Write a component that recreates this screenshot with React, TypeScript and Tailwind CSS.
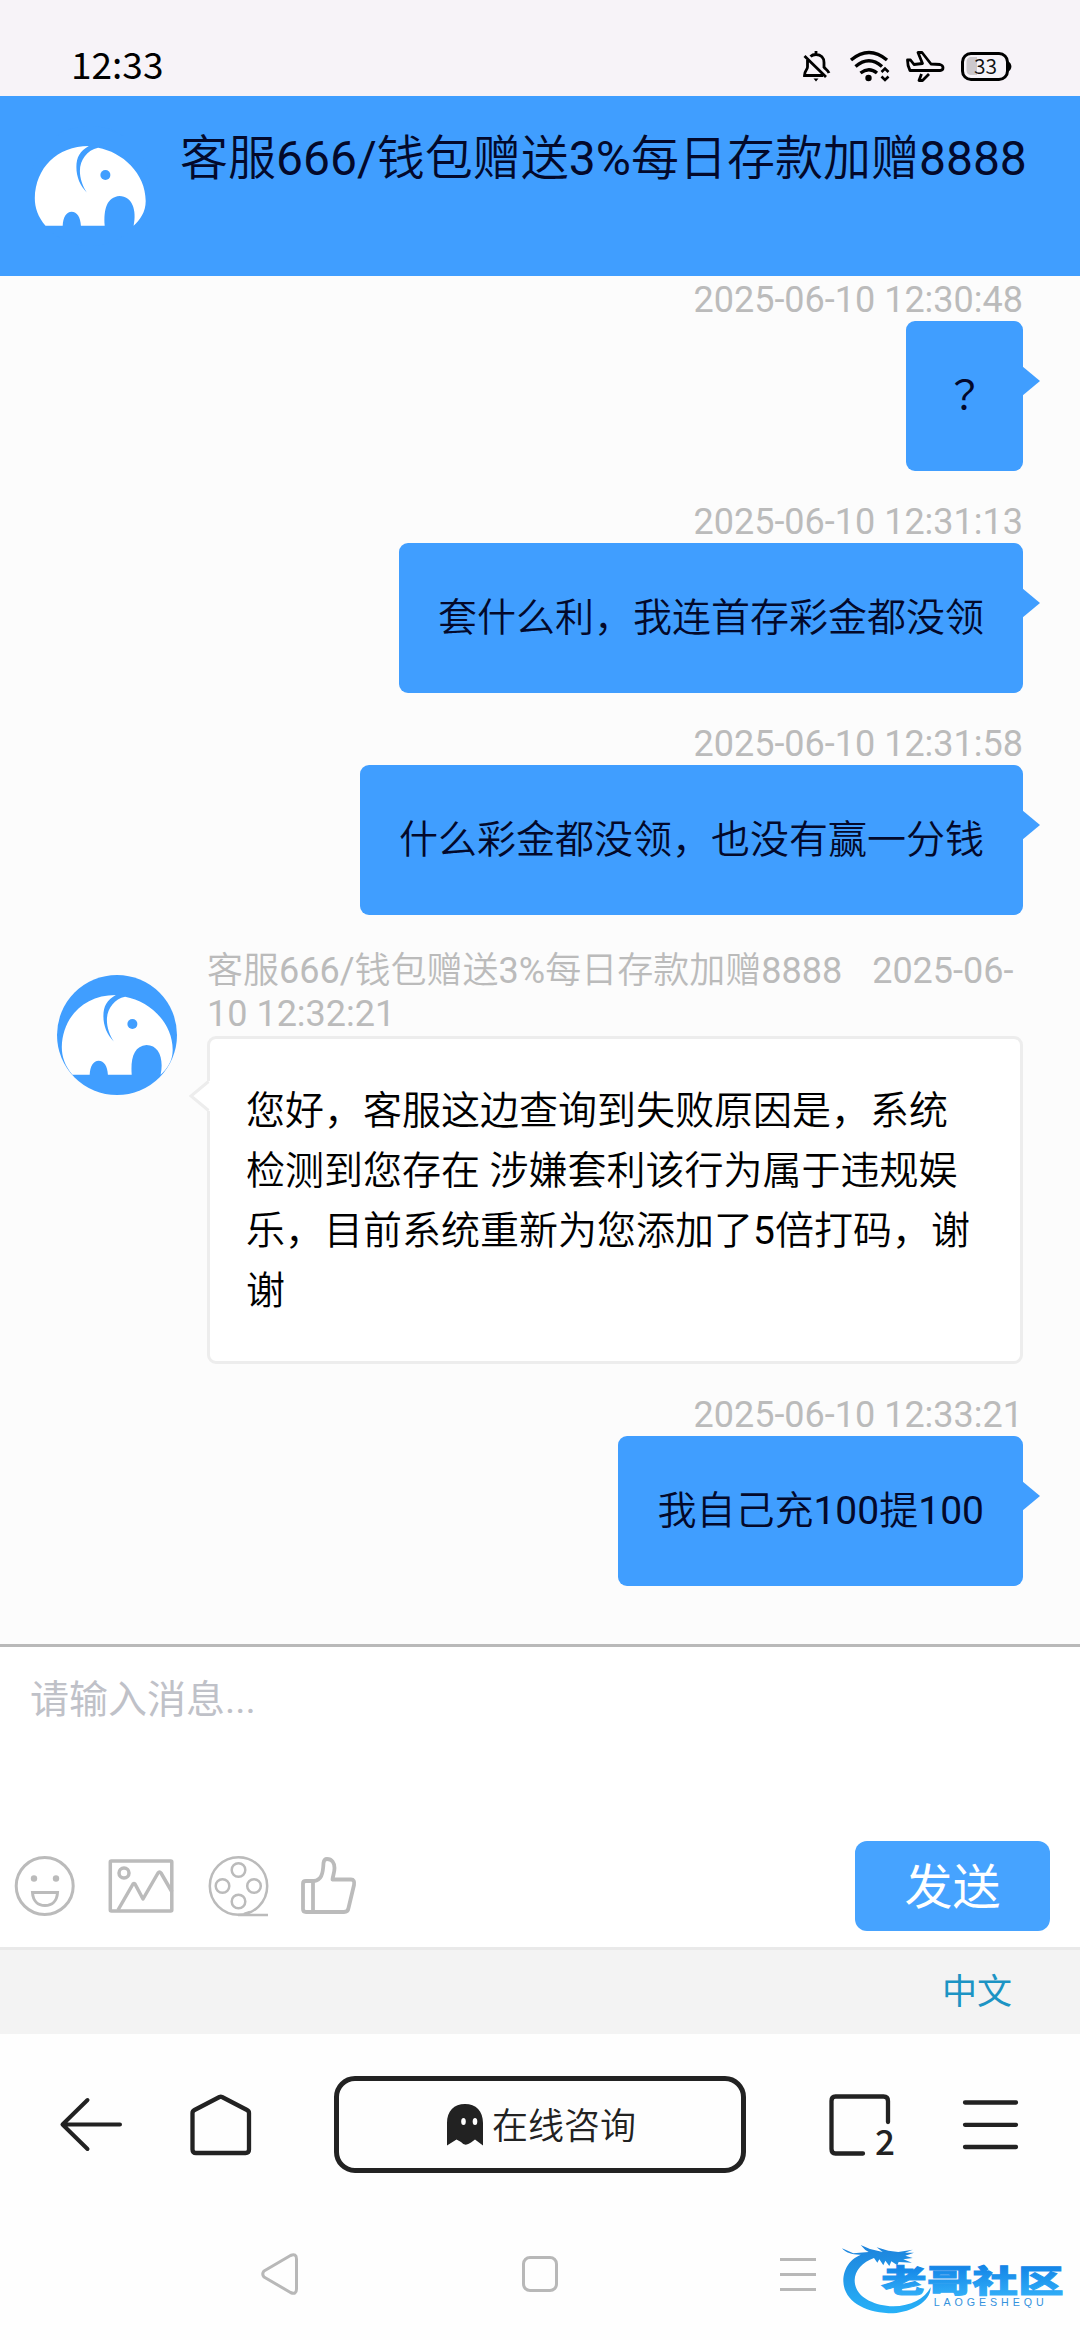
import React from "react";

const AGENT = "客服666/钱包赠送3%每日存款加赠8888";

const REPLY = [
  "您好，客服这边查询到失败原因是，系统",
  "检测到您存在 涉嫌套利该行为属于违规娱",
  "乐，目前系统重新为您添加了5倍打码，谢",
  "谢",
];

/* Chinese glyphs are set slightly lighter than the Latin letters and digits beside them. */
function Mixed({ text }: { text: string }) {
  return (
    <>
      {text.split(/([0-9/%]+)/).filter(Boolean).map((run, i) =>
        /^[0-9/%]/.test(run) ? (
          <span key={i} className="font-normal">{run}</span>
        ) : (
          <React.Fragment key={i}>{run}</React.Fragment>
        ),
      )}
    </>
  );
}

function Elephant({ className }: { className?: string }) {
  return (
    <svg viewBox="0 0 120 120" className={className}>
      <circle cx="60" cy="60" r="60" fill="#409eff" />
      <path
        d="M15.5 99.7C8 91 4.8 82 4.8 72C5.5 42 27 20 58.8 20C50 25 46.4 31 46.4 41C46.4 51 50 59.500 56.800 66.500C52.500 60 49.900 52 49.900 45C49.900 34 57 24 68.100 21.700C92 26 115.700 47 115.700 75C115.700 86 110 94 103.600 99.700C107 84 102 70 89.500 70C77 71 73.500 83 74.700 99.700H50.900C50.500 91 47 85.700 41.600 85.700C36.500 85.700 33 91 32.700 99.700Z"
        fill="#fff"
      />
      <circle cx="75.400" cy="49" r="5" fill="#409eff" />
    </svg>
  );
}

function StatusBar() {
  return (
    <div className="flex h-24 items-start bg-[#f7f3f8] pl-[71px] pr-[68px]">
      <div className="mt-[36px] font-['Noto_Sans_CJK_SC',sans-serif] text-[37px] font-normal leading-[54px] text-black">12:33</div>
      <div className="ml-auto mt-[50px] flex h-8 items-center text-black">
        <svg className="mr-[18px] h-8 w-[29px]" viewBox="0 0 29 32" fill="none" stroke="currentColor" strokeWidth="2.800">
          <path d="M14 1V5M8.500 6.500C10 5 12 4.500 14 4.500C19 4.500 22 8 22 12.500V18M5.500 10V17C5.500 20 2.500 20.500 2.500 25.500H21M2.500 6L24 27M22 17C23 19 26 20 27 23" />
          <path d="M11.500 28.500H16.500L14 31.500Z" fill="currentColor" stroke="none" />
        </svg>
        <svg className="mr-[14px] h-8 w-[42px]" viewBox="0 0 42 32" fill="none" stroke="currentColor" strokeWidth="3.400">
          <path d="M2 10Q20 -5 38 10M6.500 16.500Q20 5 33 16.500M11.500 23Q20 16.500 28 23" />
          <circle cx="19.500" cy="28" r="3.200" fill="currentColor" stroke="none" />
          <path d="M32.500 22L36 18.500L39.500 22M32.500 26.500L36 30L39.500 26.500" strokeWidth="2.600" />
        </svg>
        <svg className="mr-[15px] h-8 w-[40px]" viewBox="0 0 40 32" fill="none" stroke="currentColor" strokeWidth="2.800" strokeLinejoin="round">
          <path d="M2.500 10H5.500L9 14.500L17.500 13.500L13 2.500H17L26 14L35 14.500C39 15.500 39 20 35 20.500H5C3 17 2.500 14 2.500 10Z" />
          <path d="M16.500 24L14 30.500H17.500L24 24" />
        </svg>
        <svg className="h-8 w-[52px]" viewBox="0 0 52 32">
          <path d="M12 7H17V25H12C8 25 6.500 23 6.500 20V12C6.500 9 8 7 12 7Z" fill="#ccc8cc" />
          <rect x="2.500" y="3.500" width="45" height="26" rx="8.500" fill="none" stroke="#000" strokeWidth="3" />
          <path d="M48 11.500C52.500 13 52.500 20 48 21.500Z" fill="#000" />
          <text x="25.500" y="24" textAnchor="middle" fontSize="21" fontFamily="Noto Sans CJK SC, sans-serif" fill="#111">33</text>
        </svg>
      </div>
    </div>
  );
}

function Stamp({ children }: { children: React.ReactNode }) {
  return <div className="text-right text-[36px] font-normal leading-[42px] text-[#bbb]">{children}</div>;
}

function Sent({ time, text, centered = false }: { time: string; text: string; centered?: boolean }) {
  return (
    <div className="flex flex-col items-end">
      <Stamp>{time}</Stamp>
      <div className="relative h-[150px] rounded-[9px] bg-[#409eff] px-[39px] pt-[45px] text-[39px] leading-[60px] text-[#03092b]">
        {centered ? (
          <span className="font-[Roboto,'Noto_Sans_CJK_TC',sans-serif] font-normal">{text}</span>
        ) : (
          <Mixed text={text} />
        )}
        <svg className="absolute -right-[17px] top-[45px] h-[30px] w-[18px]" viewBox="0 0 18 30">
          <path d="M0 0L18 15L0 30Z" fill="#409eff" />
        </svg>
      </div>
    </div>
  );
}

function Received() {
  return (
    <div className="flex">
      <Elephant className="ml-[57px] mt-[30px] h-[120px] w-[120px] shrink-0" />
      <div className="ml-[30px] flex w-[816px] flex-col">
        <div className="pt-[5px] text-[36px] leading-[43px] text-[#bbb]">
          <div className="flex whitespace-nowrap">
            <div><Mixed text={AGENT} /></div>
            <div className="ml-[30px] font-normal">2025-06-</div>
          </div>
          <div className="font-normal">10 12:32:21</div>
        </div>
        <div className="relative h-[328px] rounded-[9px] border-[3px] border-[#ededed] bg-white px-[36px] pt-[42px] text-[39px] leading-[60px] text-black">
          {REPLY.map((line) => (
            <p key={line} className="whitespace-nowrap">
              <Mixed text={line} />
            </p>
          ))}
          <svg className="absolute -left-[22px] top-[41px] h-[32px] w-[24px]" viewBox="0 0 24 32">
            <path d="M24 0L20 1.500L3 16L20 30.500L24 32Z" fill="#fff" />
            <path d="M20.500 1.500L3 16L20.500 30.500" fill="none" stroke="#ededed" strokeWidth="3" />
          </svg>
        </div>
      </div>
    </div>
  );
}

function Composer() {
  return (
    <div className="flex h-[303px] flex-col border-b-[3px] border-[#e9e9e9] bg-white pt-[23px]">
      <div className="pl-[30px] text-[39px] font-normal leading-[60px] text-[#bfc1c8]">请输入消息...</div>
      <div className="mb-[16px] mt-auto flex h-[90px] items-center pl-[14px] pr-[30px]">
        <svg className="h-[62px] w-[62px]" viewBox="0 0 62 62" fill="none" stroke="#bbb" strokeWidth="3">
          <circle cx="30.700" cy="31" r="28.500" />
          <circle cx="20" cy="23.500" r="3.200" fill="#bbb" stroke="none" />
          <circle cx="42" cy="23.500" r="3.200" fill="#bbb" stroke="none" />
          <path d="M18.500 37.500H43.500C43 46 38 50.500 31 50.500C24 50.500 19 46 18.500 37.500Z" />
        </svg>
        <svg className="ml-[32px] h-[56px] w-[66px]" viewBox="0 0 66 56" fill="none" stroke="#bbb" strokeWidth="3.500" strokeLinejoin="round">
          <rect x="2.300" y="3" width="61.500" height="50" rx="1" />
          <circle cx="16" cy="15" r="5" />
          <path d="M10 52L25 26Q26 25 27 26L35 41L50 15Q51.500 13 53 15L64 34" />
        </svg>
        <svg className="ml-[34px] h-[62px] w-[62px]" viewBox="0 0 62 62" fill="none" stroke="#bbb" strokeWidth="2.500">
          <circle cx="30.500" cy="31" r="28.700" />
          <circle cx="30.500" cy="15" r="6.800" />
          <circle cx="14.500" cy="31" r="6.800" />
          <circle cx="46" cy="31" r="6.800" />
          <circle cx="30.500" cy="46.500" r="6.800" />
          <path d="M30 60H60" />
          <path d="M36 59L42 57" />
        </svg>
        <svg className="ml-[29px] h-[60px] w-[60px]" viewBox="0 0 60 60" fill="none" stroke="#bbb" strokeWidth="3.800" strokeLinejoin="round">
          <path d="M4 27.500Q4 25 7 25H15C22 24 24 19 24.500 7Q25 3 28 3C33 3 35.500 7 35.500 12C35.500 17 34 19 33.500 23.500H52Q56 23.500 55 29L49.500 52Q49 56 45 56H7Q4 56 4 53Z" />
          <path d="M14 25V56" />
        </svg>
        <button className="ml-auto h-[90px] w-[195px] rounded-xl bg-[#46a3ff] pt-[3px] text-[48px] font-normal leading-[87px] text-white">发送</button>
      </div>
    </div>
  );
}

function BrowserBar() {
  return (
    <div className="flex h-[97px] items-center text-[#222]">
      <svg className="ml-[58px] h-[60px] w-[66px]" viewBox="0 0 66 60" fill="none" stroke="currentColor" strokeWidth="4" strokeLinecap="round" strokeLinejoin="round">
        <path d="M62 29.500H4.500M29.500 5L4.500 29.500L29.500 54" />
      </svg>
      <svg className="ml-[64px] h-[66px] w-[66px]" viewBox="0 0 66 66" fill="none" stroke="currentColor" strokeWidth="4.300" strokeLinejoin="round">
        <path d="M31.500 5Q32.800 4.500 34 5L59 18Q61 19 61 21V57.500Q61 61 57.500 61H8Q4.500 61 4.500 57.500V21Q4.500 19 6.500 18Z" />
      </svg>
      <div className="ml-[80px] flex h-[97px] w-[412px] items-center rounded-[21px] border-[5px] border-[#222] pl-[108px] text-[36px] leading-[54px]">
        <svg className="mr-[9px] h-[42px] w-[36px]" viewBox="0 0 36 42">
          <path d="M0 19C0 7 7 0 18 0S36 7 36 19V41.500L28 35.500L24 38.500Q18 43 14 38L9.500 35.500L0 41.500Z" fill="#222" />
          <ellipse cx="16.500" cy="17.500" rx="2.300" ry="3.500" fill="#fff" />
          <ellipse cx="28" cy="17.500" rx="2.300" ry="3.500" fill="#fff" />
        </svg>
        <span className="pt-[5px]">在线咨询</span>
      </div>
      <div className="relative ml-[81px] h-[66px] w-[70px]">
        <svg className="h-[66px] w-[66px]" viewBox="0 0 66 66" fill="none" stroke="currentColor" strokeWidth="4.300" strokeLinecap="round">
          <path d="M61 30V9Q61 4.500 56.500 4.500H8.500Q4.500 4.500 4.500 9V57Q4.500 61.500 8.500 61.500H36" />
        </svg>
        <span className="absolute left-[48px] top-[26px] font-['Noto_Sans_CJK_SC',sans-serif] text-[35px] font-medium leading-[44px]">2</span>
      </div>
      <svg className="ml-[63px] h-[60px] w-[62px]" viewBox="0 0 62 60" fill="none" stroke="currentColor" strokeWidth="4.300" strokeLinecap="round">
        <path d="M5 7.500H56M5 29.800H56M5 52H56" />
      </svg>
    </div>
  );
}

function SystemNav() {
  return (
    <div className="flex h-[44px] items-center">
      <svg className="ml-[258px] h-[44px] w-[42px]" viewBox="0 0 42 44" fill="none" stroke="#b8b8b8" strokeWidth="3" strokeLinejoin="round">
        <path d="M6 19L32.500 3.500Q38.500 1 38.500 7V37Q38.500 43 32.500 40.500L6 25Q3.500 22 6 19Z" />
      </svg>
      <div className="ml-[222px] h-[36px] w-[36px] rounded-[8px] border-[3px] border-[#b8b8b8]" />
      <div className="ml-[222px] flex h-[33px] w-[36px] flex-col justify-between">
        <div className="h-[3px] bg-[#b8b8b8]" />
        <div className="h-[3px] bg-[#b8b8b8]" />
        <div className="h-[3px] bg-[#b8b8b8]" />
      </div>
    </div>
  );
}

function Watermark() {
  return (
    <svg className="absolute bottom-[10px] right-0 h-[100px] w-[250px]" viewBox="0 0 750 300">
      <defs>
        <linearGradient id="ring" x1="0" y1="0" x2="0" y2="1">
          <stop offset="0" stopColor="#1d83dc" />
          <stop offset="1" stopColor="#27b1f8" />
        </linearGradient>
        <linearGradient id="word" x1="0" y1="0" x2="0" y2="1">
          <stop offset="0.200" stopColor="#1283e6" />
          <stop offset="1" stopColor="#35b4fa" />
        </linearGradient>
      </defs>
      <path
        d="M112 68C65 78 40 112 40 154C42 214 105 250 190 250C245 246 302 216 302 172C285 206 242 229 190 229C128 227 74 199 74 151C74 121 98 96 132 84L142 98L148 88L160 106L166 92L178 108L184 94L202 106L206 96L246 98L220 88L248 84L226 77L252 68H225L248 59L205 66L175 62L140 52L158 66L120 57L92 45L106 60L116 66L70 70L36 55C50 72 80 78 112 72Z"
        fill="url(#ring)"
      />
      <g fontFamily="Noto Sans CJK SC, sans-serif" fontWeight="900" fill="url(#word)" stroke="url(#word)" strokeWidth="3">
        <text transform="translate(154 185) scale(1.360 .92)" fontSize="100" textLength="402" lengthAdjust="spacing">老哥社区</text>
      </g>
      <text x="311" y="229" fontFamily="Liberation Sans, sans-serif" fontWeight="400" fontSize="32" textLength="330" fill="#3592dd">LAOGESHEQU</text>
    </svg>
  );
}

export default function App() {
  return (
    <div className="relative flex h-[2340px] w-[1080px] flex-col overflow-hidden bg-[#fefefe] font-[Roboto,'Noto_Sans_CJK_SC',sans-serif] font-[350]">
      <StatusBar />
      <header className="flex h-[180px] items-start bg-[#409eff] pl-[30px]">
        <Elephant className="mt-[30px] h-[120px] w-[120px]" />
        <h1 className="ml-[30px] mt-[27px] whitespace-nowrap text-[48px] font-[350] leading-[72px] text-[#03092b]">
          <Mixed text={AGENT} />
        </h1>
      </header>
      <main className="flex h-[1371px] flex-col gap-[30px] border-b-[3px] border-[#b9b9b9] bg-[#fcfcfc] pr-[57px] pt-[3px]">
        <Sent time="2025-06-10 12:30:48" text="？" centered />
        <Sent time="2025-06-10 12:31:13" text="套什么利，我连首存彩金都没领" />
        <Sent time="2025-06-10 12:31:58" text="什么彩金都没领，也没有赢一分钱" />
        <Received />
        <Sent time="2025-06-10 12:33:21" text="我自己充100提100" />
      </main>
      <Composer />
      <div className="h-[84px] bg-[#f3f3f3] pr-[68px] pt-px text-right text-[35px] font-normal leading-[84px] text-[#1c94c4]">中文</div>
      <div className="pt-[42px]">
        <BrowserBar />
      </div>
      <div className="pt-[79px]">
        <SystemNav />
      </div>
      <Watermark />
    </div>
  );
}
